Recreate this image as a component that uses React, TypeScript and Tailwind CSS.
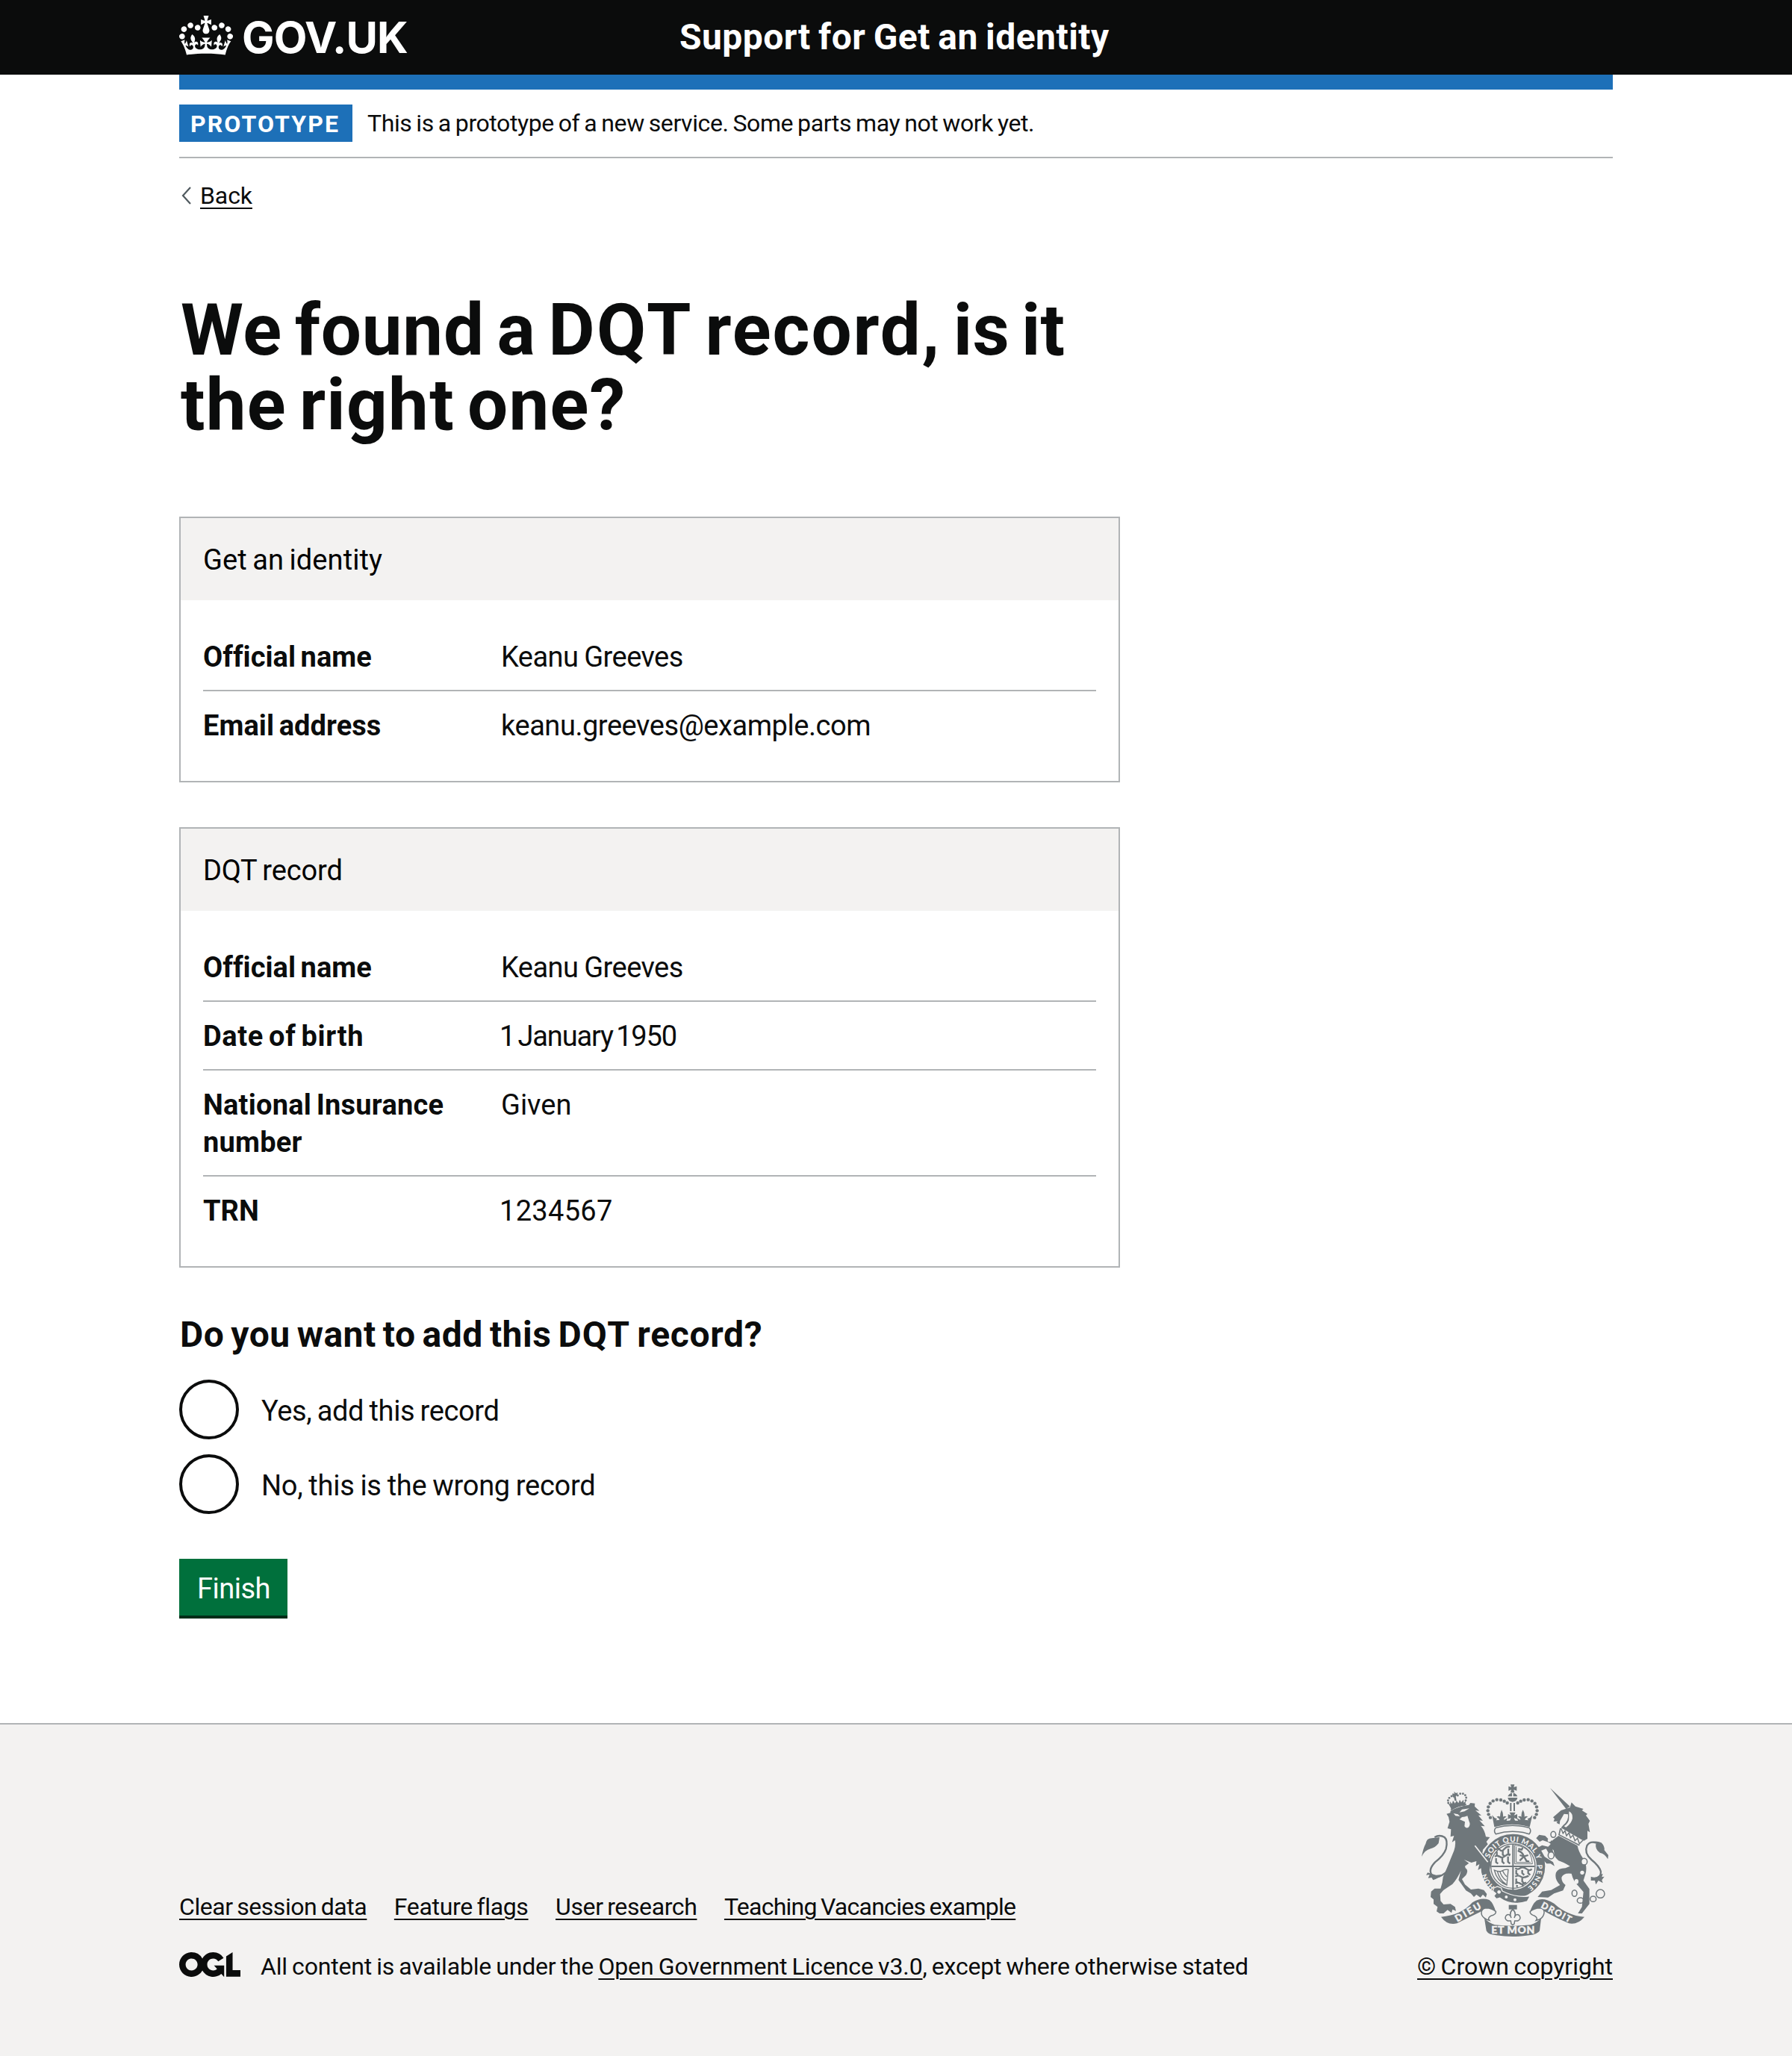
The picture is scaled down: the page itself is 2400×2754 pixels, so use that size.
import type { ReactNode } from "react";

function Crown() {
  return (
    <svg className="h-[53px] w-[72px] shrink-0" viewBox="0 0 132 97" fill="currentColor" aria-hidden="true">
      <path d="M25 30.2c3.5 1.5 7.7-.2 9.1-3.7 1.5-3.6-.2-7.8-3.9-9.2-3.6-1.4-7.6.3-9.1 3.9-1.4 3.5.3 7.5 3.9 9zM9 39.5c3.6 1.5 7.8-.2 9.2-3.7 1.5-3.6-.2-7.8-3.9-9.1-3.6-1.5-7.6.2-9.1 3.8-1.4 3.5.3 7.5 3.8 9zM4.4 57.2c3.5 1.5 7.7-.2 9.1-3.8 1.5-3.6-.2-7.7-3.9-9.1-3.5-1.5-7.6.3-9.1 3.8-1.4 3.5.3 7.6 3.9 9.1zm38.3-21.4c3.5 1.5 7.7-.2 9.1-3.8 1.5-3.6-.2-7.7-3.9-9.1-3.6-1.5-7.6.3-9.1 3.8-1.3 3.6.4 7.7 3.9 9.1zm64.4-5.6c-3.6 1.5-7.8-.2-9.1-3.7-1.5-3.6.2-7.8 3.8-9.2 3.6-1.4 7.7.3 9.2 3.9 1.3 3.5-.4 7.5-3.9 9zm15.9 9.3c-3.6 1.5-7.7-.2-9.1-3.7-1.5-3.6.2-7.8 3.7-9.1 3.6-1.5 7.7.2 9.2 3.8 1.5 3.5-.3 7.5-3.8 9zm4.7 17.7c-3.6 1.5-7.8-.2-9.2-3.8-1.5-3.6.2-7.7 3.9-9.1 3.6-1.5 7.7.3 9.2 3.8 1.3 3.5-.4 7.6-3.9 9.1zM89.3 35.8c-3.6 1.5-7.8-.2-9.2-3.8-1.4-3.6.2-7.7 3.9-9.1 3.6-1.5 7.7.3 9.2 3.8 1.4 3.6-.3 7.7-3.9 9.1zM69.7 17.7l8.9 4.7V9.3l-8.9 2.8c-.2-.3-.5-.6-.9-.9L72.4 0H59.6l3.5 11.2c-.3.3-.6.5-.9.9l-8.8-2.8v13.1l8.8-4.7c.3.3.6.7.9.9l-5 15.4v.1c-.2.8-.4 1.6-.4 2.4 0 4.1 3.1 7.5 7 8.1h.2c.3 0 .7.1 1 .1.4 0 .7 0 1-.1h.2c4-.6 7.1-4.1 7.1-8.1 0-.8-.1-1.7-.4-2.4V34l-5.1-15.4c.4-.2.7-.6 1-.9zM66 92.8c16.9 0 32.8 1.1 47.1 3.2 4-16.9 8.9-26.7 14-33.5l-9.6-3.4c1 4.9 1.1 7.2 0 10.2-1.5-1.4-3-4.3-4.2-8.7L108.6 76c2.8-2 5-3.2 7.5-3.3-4.4 9.4-10 11.9-13.6 11.2-4.3-.8-6.3-4.6-5.6-7.9 1-4.7 5.7-5.9 8-.5 4.3-8.7-3-11.4-7.6-8.8 7.1-7.2 7.9-13.5 2.1-21.1-8 6.1-8.1 12.3-4.5 20.8-4.7-5.4-12.1-2.5-9.5 6.2 3.4-5.2 7.9-2 7.2 3.1-.6 4.3-6.4 7.8-13.5 7.2-10.3-.9-10.9-8-11.2-13.8 2.5-.5 7.1 1.8 11 7.3L80.2 60c-4.1 4.4-8 5.3-12.3 5.4 1.4-4.4 8-11.6 8-11.6H55.5s6.4 7.2 7.9 11.6c-4.2-.1-8-1-12.3-5.4l1.4 16.4c3.9-5.5 8.5-7.7 10.9-7.3-.3 5.8-.9 12.8-11.1 13.8-7.2.6-12.9-2.9-13.5-7.2-.7-5 3.8-8.3 7.1-3.1 2.7-8.7-4.6-11.6-9.4-6.2 3.7-8.5 3.6-14.7-4.6-20.8-5.8 7.6-5 13.9 2.2 21.1-4.7-2.6-11.9.1-7.7 8.8 2.3-5.5 7.1-4.2 8.1.5.7 3.3-1.3 7.1-5.7 7.9-3.5.7-9-1.8-13.5-11.2 2.5.1 4.7 1.3 7.5 3.3l-4.7-15.4c-1.2 4.4-2.7 7.2-4.3 8.7-1.1-3-.9-5.3 0-10.2l-9.5 3.4c5 6.9 9.9 16.7 14 33.5 14.8-2.1 30.8-3.2 47.7-3.2z" />
    </svg>
  );
}

function LicenceLogo() {
  return (
    <svg className="mt-px h-[33px] w-[82px] shrink-0" viewBox="0 0 483.2 195.7" preserveAspectRatio="none" fill="currentColor" aria-hidden="true">
      <path d="M421.5 142.8V.1l-50.7 32.3v161.1h112.4v-50.7zm-122.3-9.6A47.12 47.12 0 0 1 221 97.8c0-26 21.1-47.1 47.1-47.1 16.7 0 31.4 8.7 39.7 21.8l42.7-27.2A97.63 97.63 0 0 0 268.1 0c-36.5 0-68.3 20.1-85.1 49.7A98 98 0 0 0 97.8 0C43.9 0 0 43.9 0 97.8s43.9 97.8 97.8 97.8c36.5 0 68.3-20.1 85.1-49.7a97.76 97.76 0 0 0 149.6 25.4l19.4 22.2h3v-87.8h-80l24.3 27.5zM97.8 145c-26 0-47.1-21.1-47.1-47.1s21.1-47.1 47.1-47.1 47.1 21.1 47.1 47.1S123.8 145 97.8 145" />
    </svg>
  );
}

const crownPearls = [
  [341, 180], [338, 165], [340, 150], [347, 136], [359, 126], [374, 121], [390, 122], [404, 127], [416, 134],
  [533, 180], [536, 165], [534, 150], [527, 136], [515, 126], [500, 121], [484, 122], [470, 127], [458, 134],
  [348, 193], [526, 193],
];

const lionPearls = [
  [179, 134], [178, 124], [183, 114], [192, 107], [201, 108], [217, 104], [227, 97], [238, 97], [247, 103], [251, 113], [249, 124],
];

function Arms() {
  return (
    <svg className="h-[204px] w-[250px] text-[#6f777b]" viewBox="72 59 750 612" fill="currentColor" aria-hidden="true">
      {/* Royal crown */}
      <path d="M429 60h16l-3 11 12-4v18l-12-4 3 12h-16l3-12-11 4V67l11 4z" />
      <path d="M418 108q4-12 17-14v14zM440 94q13 2 17 14h-17zM418 113h39q-2 15-20 17-17-2-19-17z" />
      {crownPearls.map(([x, y]) => <circle key={`${x}-${y}`} cx={x} cy={y} r="6.6" />)}
      <path d="M427 134h6v33h-6zM441 134h6v33h-6zM425 172h24l-6 12 13-5v20l-13-5 5 14h-22l5-14-12 5v-20l12 5z" />
      <path d="M355 183q8 12 20 15l-4 6 14-2q-2-8-12-12 10-6 14 0 0-14 6-28 8 14 6 28 6-6 14 0-12 4-10 12l14-7-4 11 23-2 23 2-4-11 14 7q0-8-10-12 8-6 14 0-2-14 6-28 8 14 6 28 6-6 14 0-12 4-12 12l14 2-4-6q12-3 20-15l-11 48q-71-22-142 0z" />
      <path d="M370 234q67-18 134 0 11 12 0 25-67-20-134 0-11-13 0-25z" fill="none" stroke="currentColor" strokeWidth="4.500" />

      {/* Garter and shield */}
      <circle cx="439" cy="388" r="112" fill="none" stroke="currentColor" strokeWidth="34" />
      <circle cx="439" cy="388" r="89" fill="none" stroke="currentColor" strokeWidth="4" />
      <path d="M436 300h6v186h-6zM352 386h174v6H352z" />
      <g fill="none" stroke="currentColor" strokeWidth="5">
        <path d="M371 322q8-10 15 0t18-3 22-8M374 330v14l8 5M398 324v18l8 6M420 318v22l7 6M366 350q10-8 20 0t22-3 20-4M371 356v16l8 6M396 352v18l8 8M419 349v22l8 7" strokeWidth="7" />
        <path d="M448 396q10 8 20 0t25 3 21 0M452 404v14l8 4M476 404v12l8 8M500 404v12l8 8M448 430q12-8 22 0t32-3M452 438v12l7 5M476 436v14l8 7M448 458q12-7 20 0t24-5M455 464v8M478 462v9" strokeWidth="7" />
        <path d="M446 304q42 4 58 28 12 22 13 47h-71zM452 310v63h58" strokeWidth="3" />
        <path d="M458 326q18 4 25 23l17-5M466 344l17 5-17 17M483 349l10 18 11 3M460 318l14 4 4-8" strokeWidth="7" />
        <path d="M364 404q18 8 28 4 16-8 28-6l-6 62q-39-14-50-60zM376 408q8 34 34 52M386 408q6 24 26 38M397 406q6 14 17 24" strokeWidth="4" />
      </g>
      <path d="M362 476l14-6 16 6 4 12q54 28 112 20l-12 22q-64 20-110-14l-14 4-10-12 8-10-12-10z" stroke="#f3f2f1" strokeWidth="4" />
      <circle cx="383" cy="492" r="7" fill="#f3f2f1" />
      <circle cx="412" cy="512" r="6" fill="#f3f2f1" />
      <circle cx="447" cy="523" r="6" fill="#f3f2f1" />

      {/* Lion */}
      {lionPearls.map(([x, y]) => <circle key={`${x}-${y}`} cx={x} cy={y} r="4.300" />)}
      <path d="M202 88l8 7 7-3-2 11-6 4 3 18-7 1-4-17-6-4 1-9 8 1zM178 134l9 5-1-11 8 10 4-14 8 12 6-11 8 10 5-14 6 11 9-11 1 12 8-6-2 18q-30 0-54 17z" />
      <path d="M188 159q28-18 62-22l2 5q-34 4-61 22z" />
      <path d="M172 178L187 174 188 166Q224 146 262 142L268 134 286 136 285 148 304 166 288 164 312 184 300 184 318 206 304 204 326 228 310 226Q326 244 330 270L346 272 332 290 338 300 318 322 316 336 334 346 350 372 346 400 338 416 330 404 322 418 312 406 314 394 298 404 304 380 290 388 292 368 272 374 242 362 262 376 246 388 248 396Q262 404 250 424L234 440 246 462 270 482 300 478 322 484 334 500 330 514 318 502 308 514 292 502 282 512 270 498 250 486 232 460 220 444 230 406Q214 440 196 460L160 484 146 500 148 528 160 542 188 540 206 552 210 568 196 562 192 576 176 564 160 578 144 578 132 570 136 552 120 540 120 522 108 512 110 490 124 478 148 478Q156 458 158 432L176 390Q192 350 202 326 210 300 206 284L194 292 202 266 188 270 190 240 176 236 184 210 180 190Z" />
      <path d="M206 380Q180 408 154 424 128 440 114 424 96 404 126 372 162 344 170 318 178 284 164 272 144 260 124 272" fill="none" stroke="currentColor" strokeWidth="7" />
      <path d="M72 350Q78 316 88 298 92 276 112 276L144 272 140 296Q126 314 108 318 84 324 72 350ZM96 414L90 424 104 422 98 436 112 434 118 444Q140 438 152 422L130 424Z" />
      <path d="M200 176l18 4 8 8-18-2zM234 160l-10 12 20-4 20-12zM222 190q18 4 34-4l6 20q8 16-2 26-10 6-16-4l2-18-22-10 10-8z" fill="#f3f2f1" />
      <path d="M286 306l52 66" fill="none" stroke="#f3f2f1" strokeWidth="5" />

      {/* Garter motto */}
      <g fill="#f3f2f1" fontFamily="Lato, sans-serif" fontWeight="900" fontSize="30">
        <path id="garterTop" d="M345 357A100 100 0 0 1 538 374" fill="none" />
        <path id="garterSide" d="M536 382A98 98 0 0 1 494 476" fill="none" />
        <path id="garterLow" d="M366 472A112 112 0 0 1 329 408" fill="none" />
        <text textLength="252"><textPath href="#garterTop">SOIT QUI MAL Y</textPath></text>
        <text textLength="104" fontSize="28"><textPath href="#garterSide">PENSE</textPath></text>
        <text textLength="66" fontSize="28"><textPath href="#garterLow">HON</textPath></text>
      </g>

      {/* Unicorn */}
      <path d="M588 74L668 148 652 158ZM668 152L674 132 690 148 722 158 716 164 738 178 732 184 748 206 742 218 748 252 738 246 738 278 724 286 712 280 632 234 640 224Q664 206 660 180L644 178 628 206 626 220 614 214 618 208 602 208 606 198 600 192 632 164Z" />
      <path d="M664 168q16 8 14 28-4 20-26 36l-8-4q22-16 20-36z" fill="#f3f2f1" />
      <path d="M632 236L640 256 648 246 654 266 664 254 670 274 680 264 688 286 698 276 706 298 720 284" fill="none" stroke="currentColor" strokeWidth="4.500" />
      <path d="M630 236L624 262 706 304" fill="none" stroke="currentColor" strokeWidth="5" />
      <path d="M622 266L698 306Q702 330 720 356 740 388 730 420L722 446 746 480 746 540 716 578 700 578 716 552 722 492 700 466Q682 450 674 418 640 414 634 434 634 452 650 464L640 486 604 498 580 514 538 512 556 490 592 484 628 464Q604 438 612 414 620 396 650 396L668 388Q640 372 622 366 608 354 606 344L602 324 580 310Q596 296 598 284Z" />
      <path d="M606 352L582 336 572 318 552 326 566 350 580 362 572 372 552 350 538 314 556 304 596 314ZM606 310L582 292 558 284 546 290 532 276 544 262 568 266 586 284 608 288ZM560 346L600 372 606 388 590 378 574 378 560 362Z" />
      <path d="M772 440Q792 436 792 410 786 388 754 362 724 336 736 306 748 286 772 294" fill="none" stroke="currentColor" strokeWidth="7" />
      <path d="M752 292Q774 284 794 294 808 308 806 324L822 344 820 360Q808 338 788 334 768 322 772 296ZM752 430Q772 438 786 424L800 418 796 432 806 430 796 444 800 456 782 446 772 462 768 446 752 446Z" />
      <g fill="none" stroke="currentColor" strokeWidth="4.500">
        <ellipse cx="601" cy="261" rx="10" ry="12" />
        <ellipse cx="592" cy="345" rx="12" ry="14" fill="#f3f2f1" />
        <ellipse cx="725" cy="370" rx="12" ry="13" fill="#f3f2f1" />
        <ellipse cx="686" cy="497" rx="10" ry="13" />
        <ellipse cx="710" cy="526" rx="13" ry="11" />
        <ellipse cx="761" cy="520" rx="12" ry="11" />
        <circle cx="790" cy="499" r="17" />
      </g>
      <g fill="#f3f2f1">
        <ellipse cx="694" cy="450" rx="8" ry="10" /><circle cx="717" cy="414" r="8" /><circle cx="585" cy="284" r="7" />
      </g>

      {/* Motto scroll */}
      <path d="M150 592Q230 586 276 534 310 512 344 524 360 536 370 572L332 556Q316 556 312 570 250 600 214 618 176 628 150 592ZM726 592Q656 586 604 538 562 512 534 526 516 540 506 576L540 556Q556 556 566 570 620 600 664 618 700 624 726 592Z" />
      <path d="M332 556Q312 558 312 576 312 592 332 602L344 606Q336 596 350 588 372 582 370 570 352 556 332 556ZM546 556Q566 558 564 576 562 592 546 602L532 606Q540 596 526 588 506 582 508 570 526 556 546 556Z" fill="#f3f2f1" stroke="currentColor" strokeWidth="4.500" />
      <path d="M324 598Q340 614 366 624 438 632 510 624 536 614 552 598L546 648Q538 662 504 666 438 676 372 666 340 664 332 648Z" />
      <g fill="#f3f2f1" stroke="#f3f2f1" strokeWidth="1.200" fontFamily="Lato, sans-serif" fontWeight="900">
        <text x="352" y="660" fontSize="42" textLength="174">ET MON</text>
        <text transform="translate(215 613) rotate(-30)" fontSize="38" textLength="114">DIEU</text>
        <text transform="translate(549 553) rotate(28)" fontSize="36" textLength="132">DROIT</text>
      </g>
      <path d="M422 544h33v18h-33z" />
      <path d="M438 562q16 14 6 34 6-20 20-10 10 14-6 22h-12l-2 12-6 4-6-4-2-12h-12q-16-8-6-22 14-10 20 10-10-20 6-34z" fill="#f3f2f1" stroke="currentColor" strokeWidth="4.500" />
    </svg>
  );
}

const linkBase = "underline decoration-2 underline-offset-[5px] [word-spacing:-2px]";

function Card({ title, children }: { title: ReactNode; children: ReactNode }) {
  return (
    <section className="mb-[60px] w-[1260px] border-2 border-[#b1b4b6] leading-[50px]">
      <h2 className="bg-[#f3f2f1] px-[30px] pt-[31px] pb-[29px] text-black [word-spacing:-2px]">{title}</h2>
      <dl className="p-[30px]">{children}</dl>
    </section>
  );
}

function Row({ label, labelClass, children, valueClass = "pl-px" }: { label: string; labelClass: string; children: ReactNode; valueClass?: string }) {
  return (
    <div className="flex border-b-2 border-[#b1b4b6] pt-[21px] pb-[19px] last:border-b-0">
      <dt className={`w-[398px] shrink-0 pr-10 font-bold [word-spacing:-3px] ${labelClass}`}>{label}</dt>
      <dd className={valueClass}>{children}</dd>
    </div>
  );
}

function Radio({ children, className }: { children: ReactNode; className: string }) {
  return (
    <label className="flex h-20 items-center gap-[30px]">
      <span className="size-20 rounded-full border-4 border-[#0b0c0c]" />
      <input type="radio" name="add-record" className="sr-only" />
      <span className={`pt-1 leading-[50px] ${className}`}>{children}</span>
    </label>
  );
}

export default function App() {
  return (
    <div className="flex h-[2754px] w-[2400px] flex-col bg-white font-['Roboto',sans-serif] text-[38px] text-[#0b0c0c]">
      <header className="h-[100px] bg-[#0b0c0c] text-white">
        <div className="mx-auto flex h-full w-[1920px]">
          <a className="flex w-[670px] gap-3 pt-[21px]">
            <Crown />
            <span className="-mt-[5px] font-['Inter',sans-serif] text-[58px] leading-[68px] font-bold tracking-[-0.900px]">GOV.UK</span>
          </a>
          <span className="pt-5 text-[48px] leading-[60px] font-bold tracking-[0.450px] [word-spacing:-2px]">Support for Get an identity</span>
        </div>
      </header>

      <div className="mx-auto h-[2208px] w-[1920px]">
        <div className="h-5 bg-[#1d70b8]" />
        <div className="flex h-[92px] items-center border-b-2 border-[#b1b4b6] text-[32px]">
          <strong className="h-[50px] w-[232px] bg-[#1d70b8] pl-[15px] leading-[52px] font-bold tracking-[2.100px] text-white">PROTOTYPE</strong>
          <span className="pl-5 leading-[40px] tracking-[-0.420px] [word-spacing:-1.500px]">
            This is a prototype of a new service. Some parts may not work yet.
          </span>
        </div>

        <a className="mt-[30px] flex h-10 items-center text-[32px] leading-[40px]">
          <svg className="ml-[3px] h-6 w-[13px] text-[#505a5f]" viewBox="0 0 13 24" fill="none" stroke="currentColor" strokeWidth="2.200" aria-hidden="true">
            <path d="M12 1 2 12l10 11" />
          </svg>
          <span className="ml-3 tracking-[-0.100px] underline decoration-2 underline-offset-[5px]">Back</span>
        </a>

        <main className="pt-[110px]">
          <h1 className="mb-[100px] w-[1260px] pl-0.5 text-[96px] leading-[100px] font-bold tracking-[0.800px] [word-spacing:-8px]">
            We found a <span className="tracking-[2.400px]">DQT</span> <span className="tracking-[1.900px]">record,</span>{" "}
            <span className="tracking-[0.200px]">is it</span>
            <br />
            <span className="tracking-[1.250px]">the right one?</span>
          </h1>

          <Card title={<span className="tracking-[0.080px]">Get an identity</span>}>
            <Row label="Official name" labelClass="tracking-[0.050px]" valueClass="pl-px tracking-[-0.550px] [word-spacing:-1px]">Keanu Greeves</Row>
            <Row label="Email address" labelClass="tracking-[0.080px]" valueClass="pl-px tracking-[-0.450px]">keanu.greeves@example.com</Row>
          </Card>

          <Card title={<span className="tracking-[-0.100px]">DQT record</span>}>
            <Row label="Official name" labelClass="tracking-[0.050px]" valueClass="pl-px tracking-[-0.550px] [word-spacing:-1px]">Keanu Greeves</Row>
            <Row label="Date of birth" labelClass="tracking-[0.650px]" valueClass="-ml-px tracking-[-1.150px] [word-spacing:-4px]">1 January 1950</Row>
            <Row label="National Insurance number" labelClass="tracking-[0.230px]">Given</Row>
            <Row label="TRN" labelClass="tracking-normal" valueClass="-ml-px tracking-[0.300px]">1234567</Row>
          </Card>

          <form>
            <fieldset>
              <legend className="mb-[30px] pl-px text-[48px] leading-[60px] font-bold tracking-[0.480px] [word-spacing:-3.300px]">
                Do you want to add this <span className="tracking-[1.200px]">DQT</span> <span className="tracking-[0.700px]">record?</span>
              </legend>
              <div className="flex flex-col gap-5">
                <Radio className="tracking-[-0.370px] [word-spacing:-1.700px]">Yes, add this record</Radio>
                <Radio className="tracking-[-0.280px] [word-spacing:-1.200px]">No, this is the wrong record</Radio>
              </div>
            </fieldset>
            <button type="button" className="mt-[60px] block h-20 w-[145px] border-b-4 border-[#002d18] bg-[#00703c] pt-0.5 pl-px text-center leading-[76px] tracking-[-0.500px] text-white">
              Finish
            </button>
          </form>
        </main>
      </div>

      <footer className="flex-1 border-t-2 border-[#b1b4b6] bg-[#f3f2f1] text-[32px] leading-[40px]">
        <div className="mx-auto flex w-[1920px] items-end justify-between pt-20">
          <div>
            <ul className="mb-10 flex gap-[36.500px]">
              <li><a className={`${linkBase} tracking-[-0.440px]`}>Clear session data</a></li>
              <li><a className={`${linkBase} tracking-[-0.340px]`}>Feature flags</a></li>
              <li><a className={`${linkBase} tracking-[-0.380px]`}>User research</a></li>
              <li><a className={`${linkBase} tracking-[-0.740px]`}>Teaching Vacancies example</a></li>
            </ul>
            <div className="flex items-start gap-[27px]">
              <LicenceLogo />
              <p className="tracking-[-0.200px] [word-spacing:-1.500px]">
                All content is available under the{" "}
                <a className="tracking-[-0.130px] underline decoration-2 underline-offset-[5px]">Open Government Licence v3.0</a>, except where otherwise stated
              </p>
            </div>
          </div>
          <div className="flex flex-col items-end">
            <div className="mr-[6px] mb-5">
              <Arms />
            </div>
            <a className="underline decoration-2 underline-offset-[5px] [word-spacing:-1.500px]">© Crown copyright</a>
          </div>
        </div>
      </footer>
    </div>
  );
}
